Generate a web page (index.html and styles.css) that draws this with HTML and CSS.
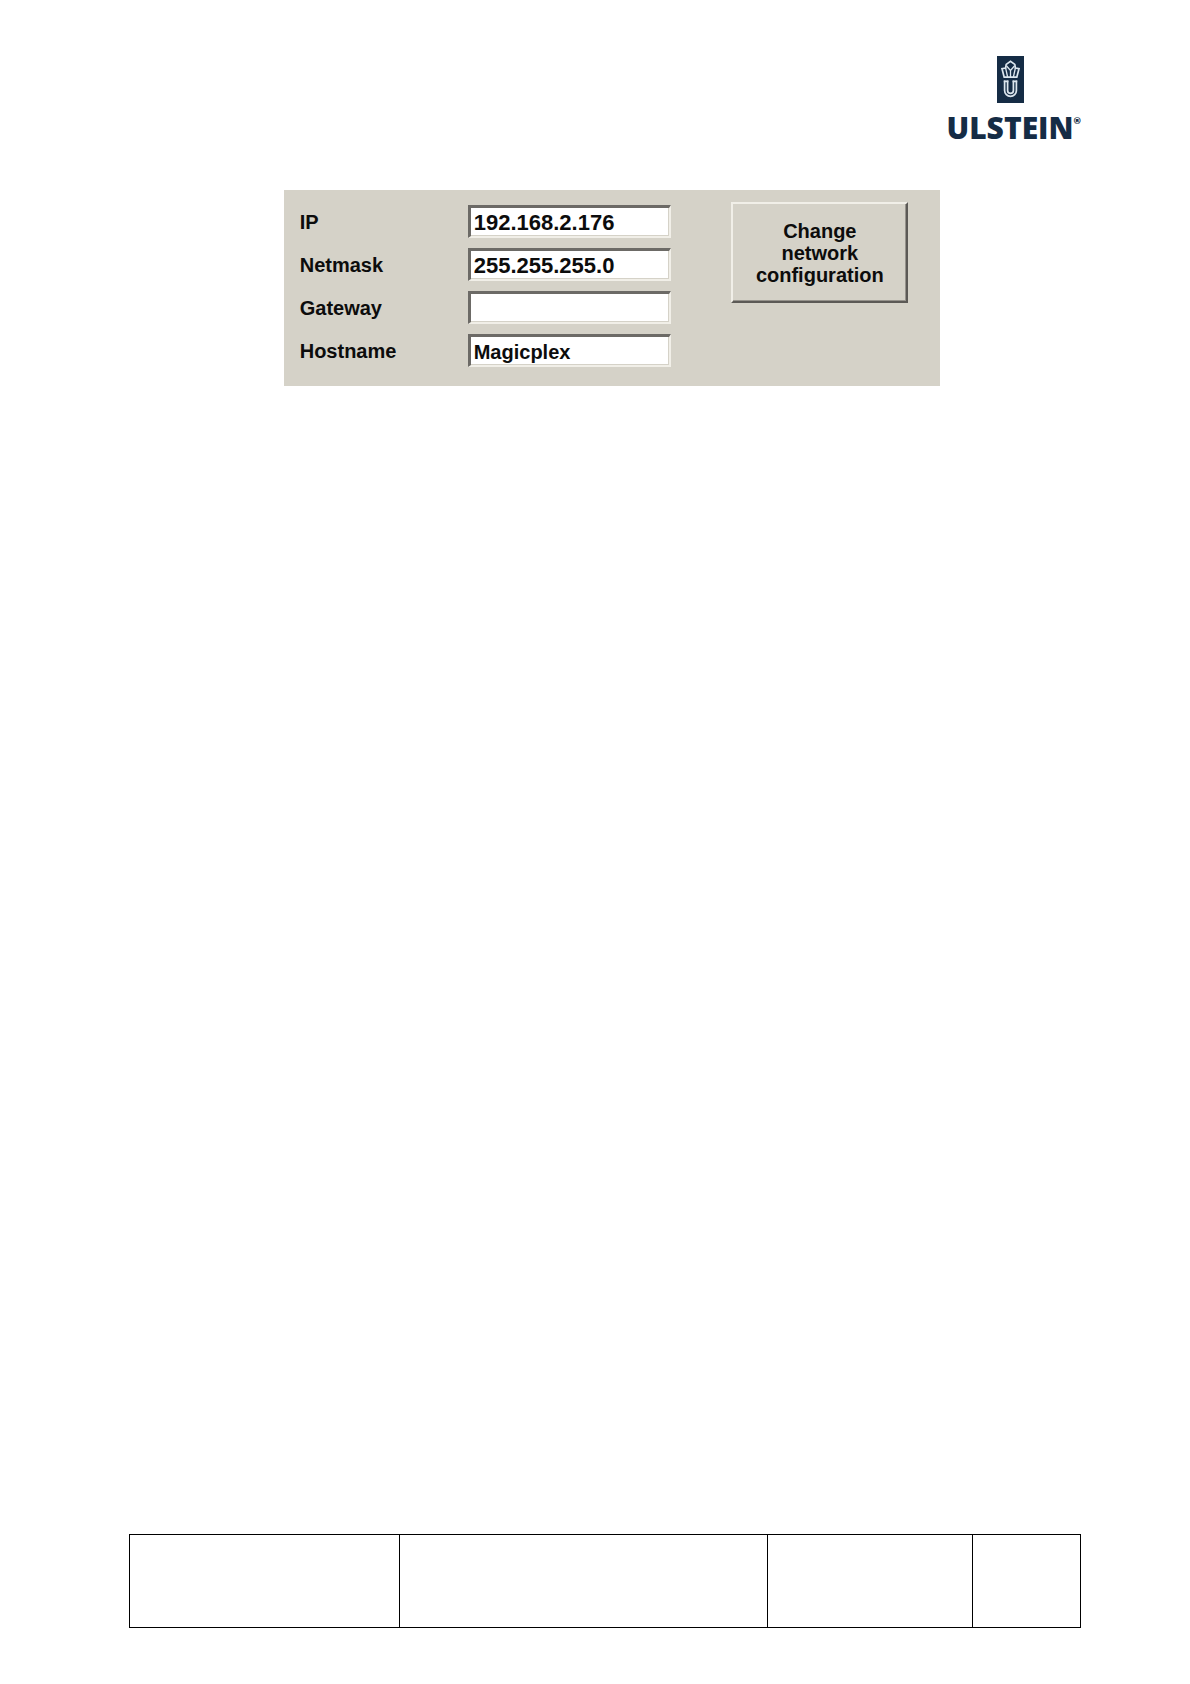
FILE: index.html
```html
<!DOCTYPE html>
<html lang="en">
<head>
  <meta charset="UTF-8" />
  <meta name="viewport" content="width=device-width, initial-scale=1.0" />
  <title>Network configuration</title>
  <link rel="stylesheet" href="styles.css">
</head>
<body>
  <div class="page">

    <header class="header">
      <div class="logo">
        <svg class="logo-mark" viewBox="0 0 27 47" aria-hidden="true">
          <rect width="27" height="47" fill="#152c45" />
          <g fill="none" stroke="#dce6ee" stroke-width="1.7">
            <path d="M7.2 21.2 L5 12.6 L8.6 12 L9.2 8.4 L13.5 5.2 L17.8 8.4 L18.4 12 L22 12.6 L19.8 21.2 Z" />
            <path d="M13.5 21 V14.5 M10.6 21 L8.6 12 M16.4 21 L18.4 12 M9.6 10 L13.5 14.5 L17.4 10" stroke-width="1.3" />
            <path d="M7.6 24.5 V34.5 A5.9 5.9 0 0 0 19.4 34.5 V24.5" />
            <path d="M10.6 24.5 V34.5 A2.9 2.9 0 0 0 16.4 34.5 V24.5" />
            <path d="M6.8 25.3 H11.4 M15.6 25.3 H20.2" />
          </g>
        </svg>
        <div class="logo-text">ULSTEIN<sup class="logo-reg">®</sup></div>
      </div>
    </header>

    <main class="content">
      <form class="panel">
        <div class="fields">
          <label for="ip">IP</label>
          <input id="ip" class="address" type="text" value="192.168.2.176">
          <label for="netmask">Netmask</label>
          <input id="netmask" class="address" type="text" value="255.255.255.0">
          <label for="gateway">Gateway</label>
          <input id="gateway" class="address" type="text">
          <label for="hostname">Hostname</label>
          <input id="hostname" type="text" value="Magicplex">
        </div>
        <button type="button" class="change-button">Change<br>network<br>configuration</button>
      </form>
    </main>

    <footer>
      <table class="footer-table">
        <tr>
          <td class="col-title"></td>
          <td class="col-document"></td>
          <td class="col-revision"></td>
          <td class="col-page"></td>
        </tr>
      </table>
    </footer>

  </div>
</body>
</html>
```
FILE: styles.css
```css
* {
  box-sizing: border-box;
}

body {
  margin: 0;
  background: #fff;
  color: #0c0c0c;
  font-family: "Liberation Sans", Arial, sans-serif;
}

.page {
  display: flex;
  flex-direction: column;
  min-height: 100vh;
  padding: 56px 109px 56px 129px;
}

/* Logo */
.header {
  display: flex;
  justify-content: flex-end;
}

.logo {
  display: flex;
  flex-direction: column;
  align-items: center;
  color: #152c45;
}

.logo-mark {
  width: 27px;
  height: 47px;
  margin-right: 6px;
}

.logo-text {
  display: flex;
  margin-top: 10px;
  font-family: "Open Sans", "Noto Sans", sans-serif;
  font-size: 30px;
  font-weight: 800;
  line-height: 30px;
}

.logo-reg {
  font-size: 9px;
  line-height: 16px;
}

/* Network settings */
.content {
  flex: 1;
  padding: 47px 0 0 14px;
}

.panel {
  display: flex;
  align-items: flex-start;
  gap: 60px;
  width: 70%;
  margin: 0 auto;
  padding: 12px 32px 19px 16px;
  background: #d5d2c8;
  font-size: 20px;
  font-weight: bold;
}

.fields {
  flex: 1;
  display: grid;
  grid-template-columns: 168px 1fr;
  row-gap: 10px;
  align-items: center;
  padding-top: 3px;
}

.fields label {
  padding-top: 2px;
}

.fields input {
  width: 100%;
  min-width: 0;
  height: 33px;
  padding: 2px 3px 0;
  background: #fff;
  border: 2px solid;
  border-color: #6c6a66 #f1efe8 #f1efe8 #6c6a66;
  border-width: 3px 2px 2px 3px;
  box-shadow: inset -1px -1px #d5d2c8;
  color: inherit;
  font: inherit;
}

.fields .address {
  font-size: 22px;
}

.change-button {
  width: 177px;
  height: 101px;
  padding: 0;
  background: #d5d2c8;
  border: 2px solid;
  border-color: #f1efe8 #5c5a56 #5c5a56 #f1efe8;
  box-shadow: inset -1px -1px #96938c;
  color: inherit;
  font: inherit;
  line-height: 22px;
}

/* Footer */
.footer-table {
  width: 100%;
  height: 94px;
  border-collapse: collapse;
  table-layout: fixed;
}

.footer-table td {
  border: 1px solid #000;
}

.col-title {
  width: 28.4%;
}

.col-document {
  width: 38.7%;
}

.col-revision {
  width: 21.5%;
}

.col-page {
  width: 11.4%;
}
```
